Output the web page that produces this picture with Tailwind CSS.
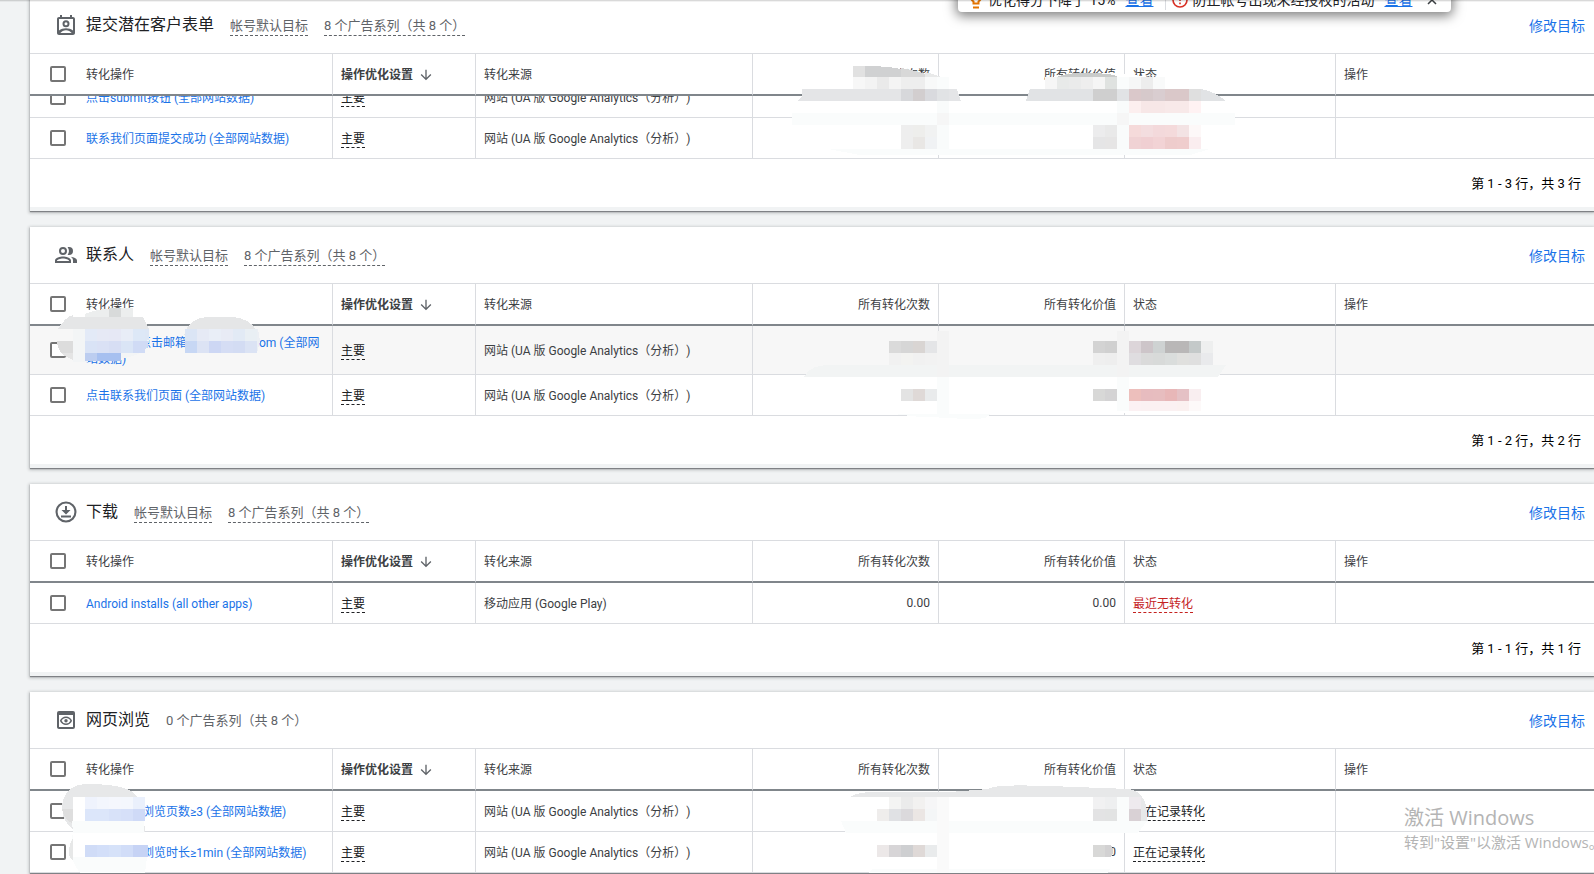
<!DOCTYPE html>
<html lang="zh-CN">
<head>
<meta charset="utf-8">
<title>转化目标</title>
<script src="https://cdn.jsdelivr.net/npm/@tailwindcss/browser@4"></script>
</head>
<body class="relative h-screen overflow-hidden bg-[#f1f3f4] font-['Roboto','Noto_Sans_CJK_SC',sans-serif] text-xs text-[#3c4043] [text-spacing-trim:space-all]">

<main id="goals" class="-mt-[3px] ml-[30px] flex flex-col gap-4"></main>

<!-- Pixelated privacy patches over account data -->
<svg id="mosaic" aria-hidden="true" class="pointer-events-none absolute top-0 left-0 h-full w-full" shape-rendering="crispEdges">
  <!-- lead form card -->
  <path fill="#fff" d="M853 66C880 65 900 68 913 71C935 75 944 80 949 84V155H1190L1231 125V113L1201 101H1165V82C1145 74 1110 72 1072 73C1050 75 1037 82 1030 89V101H797L853 89Z"/>
  <path fill="#e1e1e1" d="M853 66h12v11h-12z"/>
  <path fill="#d0d1d2" d="M865 66C880 66 892 67 901 69V77H865Z"/>
  <path fill="#d8d8d8" d="M901 68C912 70 920 72 925 74V77H901Z"/>
  <path fill="#e8e9e9" d="M925 72C933 74 939 76 941 77H925Z"/>
  <path fill="#fff" d="M865 62H908V67L865 65Z"/>
  <path fill="#c9cbca" d="M1057 77C1064 73 1080 73 1090 73C1105 73 1117 75 1117 77Z"/>
  <path fill="#e4e5e7" d="M802 89H957L961 101H797L802 97Z"/>
  <path fill="#e1e3e5" d="M1030 89H1201C1210 90 1220 96 1226 101H1026Z"/>
  <path fill="#fafcfc" d="M792 113H1235V125H792Z"/>
  <path fill="#fafcfc" d="M828 149H1210L1190 155H1040L860 155Z"/>
  <!-- contacts card -->
  <path fill="#eceeee" d="M85 314C95 310 105 308 120 308H133V317H85Z"/>
  <path fill="#e5e6e7" d="M58 329C62 322 68 316 73 315V317H143L149 329Z"/>
  <path fill="#f3f5f6" d="M73 329H149V340C148 348 140 355 130 357L103 361L73 362Z"/>
  <path fill="#dde7f6" d="M145 329H149V340L145 341Z"/>
  <path fill="#d0dbf5" d="M145 341H149C148 345 147 348 145 350Z"/>
  <path fill="#dcdcdc" d="M57 341H73V353H61C59 350 57 345 57 341Z"/>
  <path fill="#e4e4e4" d="M61 353H73V360C68 358 64 356 61 353Z"/>
  <path fill="#e5e6e7" d="M184 335C187 323 197 317 207 317H233C246 318 256 325 258 335Z"/>
  <path fill="#eceff4" d="M257 329H258L260 341L257 353Z"/>
  <path fill="#f2f4f4" d="M804 377C808 368 818 365 830 365H1226L1218 377Z"/>
  <path fill="#fff" d="M877 377H1129V413H877Z"/>
  <path fill="#fafcfc" d="M894 414H991L985 418C970 421 950 417 920 417Z"/>
  <!-- page view card -->
  <path fill="#e7e8e9" d="M62 808C62 797 68 785 85 784C112 784 128 787 135 794C141 800 144 812 145 832H78C70 829 62 820 62 808Z"/>
  <path fill="#dedede" d="M62 809H73V824C68 821 63 816 62 809Z"/>
  <path fill="#fff" d="M73 797H85V821H73Z"/>
  <path fill="#fafcfc" d="M72 821H144V857H147L145 873H80C70 862 69 845 73 832Z"/>
  <path fill="#e7e8e8" d="M69 853C69 846 71 841 73 838V860C71 859 69 856 69 853Z"/>
  <path fill="#fff" d="M73 833H145V857H73Z"/>
  <path fill="#c6d3f5" d="M145 845H148V857H145Z"/>
  <path fill="#e7e8e9" d="M850 797C858 792 866 792 885 792L950 792L988 789C996 785 1010 785 1050 786L1129 789C1140 790 1147 802 1147 812L1147 821H1129V797Z"/>
  <path fill="#fff" d="M877 797H1124V833H1112V870H877Z"/>
  <path fill="#fafcfc" d="M841 821H1147L1138 833H846Z"/>
  <path fill="#fafcfc" d="M872 869H1110L1108 873H868Z"/>
  <path fill="#d2d1d2" d="M1105 845H1111C1114 849 1114 853 1111 857H1105Z"/>
</svg>

<!-- Bottom edge of the recommendations notice -->
<aside class="absolute -top-[13px] left-[958px] flex h-[25px] w-[493px] items-center rounded-b bg-white pl-2.5 text-sm whitespace-nowrap text-[#202124] shadow-[0_2px_12px_2px_rgba(0,0,0,0.5)]">
  <svg aria-hidden="true" class="h-5 w-4 shrink-0" viewBox="0 0 16 20" fill="none" stroke="#e37400" stroke-width="2"><path d="M5.500 13.500V11.500A5 5 0 1 1 10.500 11.500V13.500Z"/><path d="M5 17.500h6"/></svg>
  <span class="ml-1">优化得分下降了 15%</span>
  <a href="#" class="ml-2.5 text-[#1a73e8] underline">查看</a>
  <span class="ml-3 h-5 w-px bg-[#dadce0]"></span>
  <svg aria-hidden="true" class="ml-1.5 h-4 w-4 shrink-0" viewBox="0 0 16 16" fill="none" stroke="#d93025" stroke-width="1.600"><circle cx="8" cy="8" r="7"/><path d="M8 4v5M8 10.500v1.800"/></svg>
  <span class="ml-1">防止帐号出现未经授权的活动</span>
  <a href="#" class="ml-2.5 text-[#1a73e8] underline">查看</a>
  <button type="button" aria-label="关闭" class="ml-3 flex h-4 w-4 items-center justify-center"><svg aria-hidden="true" class="h-2.5 w-2.5" viewBox="0 0 10 10" stroke="#3c4043" stroke-width="1.500"><path d="M1 1l8 8M9 1l-8 8"/></svg></button>
</aside>
<div class="pointer-events-none absolute top-0 left-0 h-0.5 w-full bg-linear-to-b from-black/20 to-transparent"></div>

<!-- System activation watermark -->
<div class="pointer-events-none absolute top-[804px] left-[1404px] font-['Open_Sans','Noto_Sans_CJK_SC',sans-serif] whitespace-nowrap text-[#b4b4b4]">
  <p class="text-xl leading-7">激活 Windows</p>
  <p class="text-[15px] leading-5">转到"设置"以激活 Windows。</p>
</div>

<script>
const icons = {
  form: '<path d="M19 4h-1V2h-2v2H8V2H6v2H5c-1.110 0-2 .9-2 2v14c0 1.100.89 2 2 2h14c1.100 0 2-.9 2-2V6c0-1.100-.9-2-2-2zm0 2v11.600C17.200 16 14.500 15.200 12 15.200S6.800 16 5 17.600V6h14zM6.300 20c1.300-1.700 3.400-2.800 5.700-2.800s4.400 1.100 5.700 2.800H6.300z"/><path d="M12 7.300a3.500 3.500 0 1 0 0 7 3.500 3.500 0 0 0 0-7zm0 5a1.500 1.500 0 1 1 0-3 1.500 1.500 0 0 1 0 3z"/>',
  people: '<path d="M9 12a4 4 0 1 0 0-8 4 4 0 0 0 0 8zm0-6a2 2 0 1 1 0 4 2 2 0 0 1 0-4zM9 13.500c-2.700 0-8 1.300-8 4V20h16v-2.500c0-2.700-5.300-4-8-4zM15 18H3v-.5c.2-.7 3.300-2 6-2s5.800 1.300 6 2v.5zM15 12a4 4 0 0 0 0-8c-.5 0-1 .1-1.400.3A6.500 6.500 0 0 1 15 8a6.500 6.500 0 0 1-1.400 3.700c.4.200.9.300 1.400.3zM16.700 13.700c1.400.9 2.300 2.100 2.300 3.800V20h4v-2.500c0-2.200-3.500-3.500-6.300-3.800z"/>',
  download: '<path d="M12 1.500A10.500 10.500 0 1 0 12 22.500 10.500 10.500 0 0 0 12 1.500zm0 18.900a8.400 8.400 0 1 1 0-16.800 8.400 8.400 0 0 1 0 16.800z"/><path d="M11 6h2v4h3.500L12 14.500 7.500 10H11zM7 15.500h10v2H7z"/>',
  view: '<path d="M19 3H5a2 2 0 0 0-2 2v14c0 1.100.9 2 2 2h14a2 2 0 0 0 2-2V5a2 2 0 0 0-2-2zm0 16H5V7h14v12z"/><path d="M12 8.500c-2.700 0-5.100 1.700-6.100 4.300 1 2.500 3.400 4.200 6.100 4.200s5.100-1.700 6.100-4.200c-1-2.600-3.400-4.300-6.100-4.300zm0 7a4.600 4.600 0 0 1-4.400-2.700 4.800 4.800 0 0 1 8.800 0A4.600 4.600 0 0 1 12 15.500z"/><circle cx="12" cy="12.700" r="1.700"/>'
};
const ua = '网站 (UA 版 Google Analytics（分析）)';
const blank = w => '<span class="inline-block ' + w + '"></span>';
const cards = [
  { icon: 'form', title: '提交潜在客户表单', std: true, used: '8', n: 3, rows: [
    { name: '点击submit按钮 (全部网站数据)', src: ua, clipped: true },
    { name: '联系我们页面提交成功 (全部网站数据)', src: ua }]},
  { icon: 'people', title: '联系人', std: true, used: '8', n: 2, rows: [
    { name: blank('w-[53px]') + '点击邮箱' + blank('w-[72px]') + 'om (全部网<br>站数据)', src: ua, tall: true },
    { name: '点击联系我们页面 (全部网站数据)', src: ua }]},
  { icon: 'download', title: '下载', std: true, used: '8', n: 1, rows: [
    { name: 'Android installs (all other apps)', src: '移动应用 (Google Play)', num: '0.00', val: '0.00', status: '最近无转化', bad: true }]},
  { icon: 'view', title: '网页浏览', used: '0', n: 0, rows: [
    { name: blank('w-14') + '浏览页数≥3 (全部网站数据)', src: ua, status: '正在记录转化' },
    { name: blank('w-14') + '浏览时长≥1min (全部网站数据)', src: ua, val: '0.00', status: '正在记录转化' }]}
];
const box = (label) => `<input type="checkbox" aria-label="${label}" class="mr-5 h-4 w-4 shrink-0 appearance-none rounded-xs border-2 border-[#757575] bg-white">`;
const text = t => `<span class="pt-0.5">${t}</span>`;
const cell = (r, html, extra) => {
  const h = r.tall ? 'h-12' : 'h-10';
  const outer = r.clipped ? 'flex h-[21px] flex-col justify-end overflow-hidden' : '';
  return `<td class="border-r border-b border-[#dadce0] p-0 last:border-r-0"><div class="${outer}"><div class="flex shrink-0 items-center px-2 ${h} ${extra || ''}">${html}</div></div></td>`;
};
const row = r => `<tr class="${r.tall ? 'bg-[#f7f7f7]' : ''}">
  ${cell(r, box('选择此转化操作') + `<a href="#" class="pt-0.5 leading-4 whitespace-nowrap text-[#1a73e8]">${r.name}</a>`, 'pl-5')}
  ${cell(r, '<span class="mt-0.5 border-b border-dashed border-[#202124] leading-4 text-[#202124]">主要</span>')}
  ${cell(r, text(r.src))}
  ${cell(r, r.num || '', 'justify-end')}
  ${cell(r, r.val || '', 'justify-end')}
  ${cell(r, r.status ? `<span class="mt-0.5 border-b border-dashed leading-4 ${r.bad ? 'border-[#c5221f] text-[#c5221f]' : 'border-[#202124] text-[#202124]'}">${r.status}</span>` : '')}
  ${cell(r, '')}
</tr>`;
const th = (html, extra) => `<th scope="col" class="border-r border-b-2 border-r-[#dadce0] border-b-[#80868b] p-0 text-left font-normal last:border-r-0"><div class="flex h-10 items-center px-2 ${extra || ''}">${html}</div></th>`;
const card = c => `<section class="bg-white shadow-[0_1px_3px_1px_rgba(60,64,67,0.3),0_1px_1px_rgba(60,64,67,0.5)]">
  <header class="flex h-14 items-center pr-[9px] pl-6">
    <svg aria-hidden="true" class="mr-2 h-6 w-6 shrink-0" viewBox="0 0 24 24" fill="#5f6368" fill-rule="evenodd">${icons[c.icon]}</svg>
    <div class="flex grow items-baseline gap-4 text-[13px] text-[#5f6368]">
      <h2 class="text-base text-[#202124]">${c.title}</h2>
      ${c.std ? '<span class="border-b border-dashed border-[#5f6368] leading-[18px]">帐号默认目标</span>' : ''}
      <span class="leading-[18px] ${c.std ? 'border-b border-dashed border-[#5f6368]' : ''}">${c.used} 个广告系列（共 8 个）</span>
    </div>
    <a href="#" class="pt-0.5 text-sm text-[#1a73e8]">修改目标</a>
  </header>
  <table class="w-full table-fixed border-separate border-spacing-0 border-t border-[#dadce0]">
    <colgroup><col class="w-[303px]"><col class="w-[143px]"><col class="w-[277px]"><col class="w-[186px]"><col class="w-[186px]"><col class="w-[211px]"><col></colgroup>
    <thead><tr>
      ${th(box('全选') + text('转化操作'), 'pl-5')}
      ${th('<span class="pt-0.5 font-bold">操作优化设置</span><svg aria-hidden="true" class="mt-0.5 ml-[5px] h-4 w-4" viewBox="0 0 24 24" fill="#5f6368"><path d="M20 12l-1.410-1.410L13 16.170V4h-2v12.170l-5.580-5.590L4 12l8 8 8-8z"/></svg>')}
      ${th(text('转化来源'))}
      ${th(text('所有转化次数'), 'justify-end')}
      ${th(text('所有转化价值'), 'justify-end')}
      ${th(text('状态'))}
      ${th(text('操作'))}
    </tr></thead>
    <tbody>${c.rows.map(row).join('')}</tbody>
  </table>
  ${c.n ? `<footer class="flex h-[52px] items-center justify-end border-b-4 border-[#f1f3f4] pt-0.5 pr-[13px] text-[13px] text-black">第 1 - ${c.n} 行，共 ${c.n} 行</footer>` : ''}
</section>`;
document.getElementById('goals').innerHTML = cards.map(card).join('');

/* Mosaic cells: x, y, height, then one colour per 12px cell */
const cells = [
  [853,77,12,'#f7f7f7 #f3f3f3 #eaeaea #f4f4f4 #eeeeee #eeeeee #f8f9f9 #fafcfc'],
  [901,89,12,'#d7d8db #d2cecf #d9dade #e1e3e5'],
  [937,101,48,'#f9fbfb'],[1117,101,48,'#f9fbfb'],
  [937,113,12,'#f6f6f6'],[1117,113,12,'#f6f6f6'],
  [901,125,12,'#eeeeee #eeeeec #f1f2f2'],[901,137,12,'#eeeeee #e9e7e5 #f0f2f4'],
  [1045,77,12,'#f6f6f6 #e8eae9 #eaebeb #eeeeee #f5f5f5 #dfe2e0 #fafcfc #f6f7f7 #ededed #f9fafa'],
  [1093,89,12,'#cfcfcf #cfcfcf #e1e3e5 #dac8ca #d6c9cb #d9cdd0 #dac8c9 #dac8c9 #dfdfdf'],
  [1129,101,12,'#fcefef #f7e7e7 #f7e7e7 #f8e9e9 #f8e9e9 #fff2f3'],
  [1093,125,12,'#ececed #e9e9e9'],[1093,137,12,'#e5e5e6 #e6e5e5'],
  [1129,125,12,'#f5dada #f3dddf #f3d9db #f4dadb #f3e3e4 #fdf8f8'],
  [1129,137,12,'#f0d2d4 #f0cfd2 #f2d3d5 #eecccc #efcdcd #faedef'],
  [109,308,9,'#d8dada'],
  [85,329,12,'#e3eaf7 #e6e9f5 #e6e8f5 #e8edf7 #dde8f7'],
  [85,341,12,'#d9e3f6 #dae1f5 #d7def4 #dae5f6 #d0dbf5'],
  [85,353,8,'#bccdf0 #a7c0f0 #a7c0f0'],
  [185,329,12,'#dbe5f5 #e6eaf5 #e9eef7 #e8ebf5 #e2eaf5 #e9eff4'],
  [185,341,12,'#c7d7f4 #dce3f4 #cdd7f4 #d5ddf4 #d3dcf3 #dbe3f4'],
  [889,341,12,'#dadada #d6d6d6 #d9d5d3 #e4e5e7'],[889,353,12,'#f1f1f1 #f3f3f1 #f1f1f1 #f2f2f2'],
  [937,331,46,'#f3f3f3'],[1117,331,46,'#f3f3f3'],[937,377,37,'#fafcfc'],[1117,377,34,'#fafcfc'],
  [1093,341,12,'#d3d3d3 #d0d0d0'],[1093,353,12,'#efefef #eeeeee'],[1093,389,12,'#d8d8d7 #d4d3d4'],
  [901,389,12,'#e3e3e3 #dfd9d7 #e9ebec'],
  [1129,341,12,'#dcd5d9 #cdc5c9 #ced2d2 #b9b7b7 #b9b7b7 #c4c9c9 #eeefef'],
  [1129,353,12,'#dfdde0 #dadada #d8dad9 #dadddc #e0e0de #dfdfdf #e9eaec'],
  [1129,389,12,'#edbfbc #e7bcbf #e7bdbf #e8b7b8 #e5c1c5 #f9eef0'],
  [1129,401,10,'#fcf1f3 #fbf1f2 #fbf1f2 #fbf1f2 #fbf1f0 #fdf9f9'],
  [85,797,12,'#eff3fd #f3f6fd #f5f7fd #f4f7fd'],[133,797,12,'#eaf0fc'],[85,809,12,'#dce6fa #dce6fa #d8e2f9 #d6e0f9'],[133,809,12,'#cfdaf7'],
  [85,845,12,'#d0dcf7 #d3dff9 #d6e2f9 #d1ddf8 #c6d3f5'],
  [889,797,12,'#f4f4f3 #ebebeb #f2f1f0 #f6f6f7'],[877,809,12,'#efedec #e0e1e4 #dbd9dc #ebe6e4 #f4f6f7'],
  [877,845,12,'#ece8e8 #d7d5d7 #cecfd1 #dfd9d7 #e9ebec'],
  [937,797,76,'#fafafa'],[1093,797,12,'#f1f1f2 #eeeff0'],[1093,809,12,'#e3e3e4 #e2e3e3'],
  [1117,797,24,'#fafcfc'],[1129,797,12,'#eeeaee'],[1129,809,12,'#d9d1d5'],[1093,845,12,'#d8d8d7']
];
document.getElementById('mosaic').insertAdjacentHTML('beforeend', cells.map(([x, y, h, list]) =>
  list.split(' ').map((f, i) => `<rect x="${x + i * 12}" y="${y}" width="12" height="${h}" fill="${f}"/>`).join('')).join(''));
</script>
</body>
</html>
